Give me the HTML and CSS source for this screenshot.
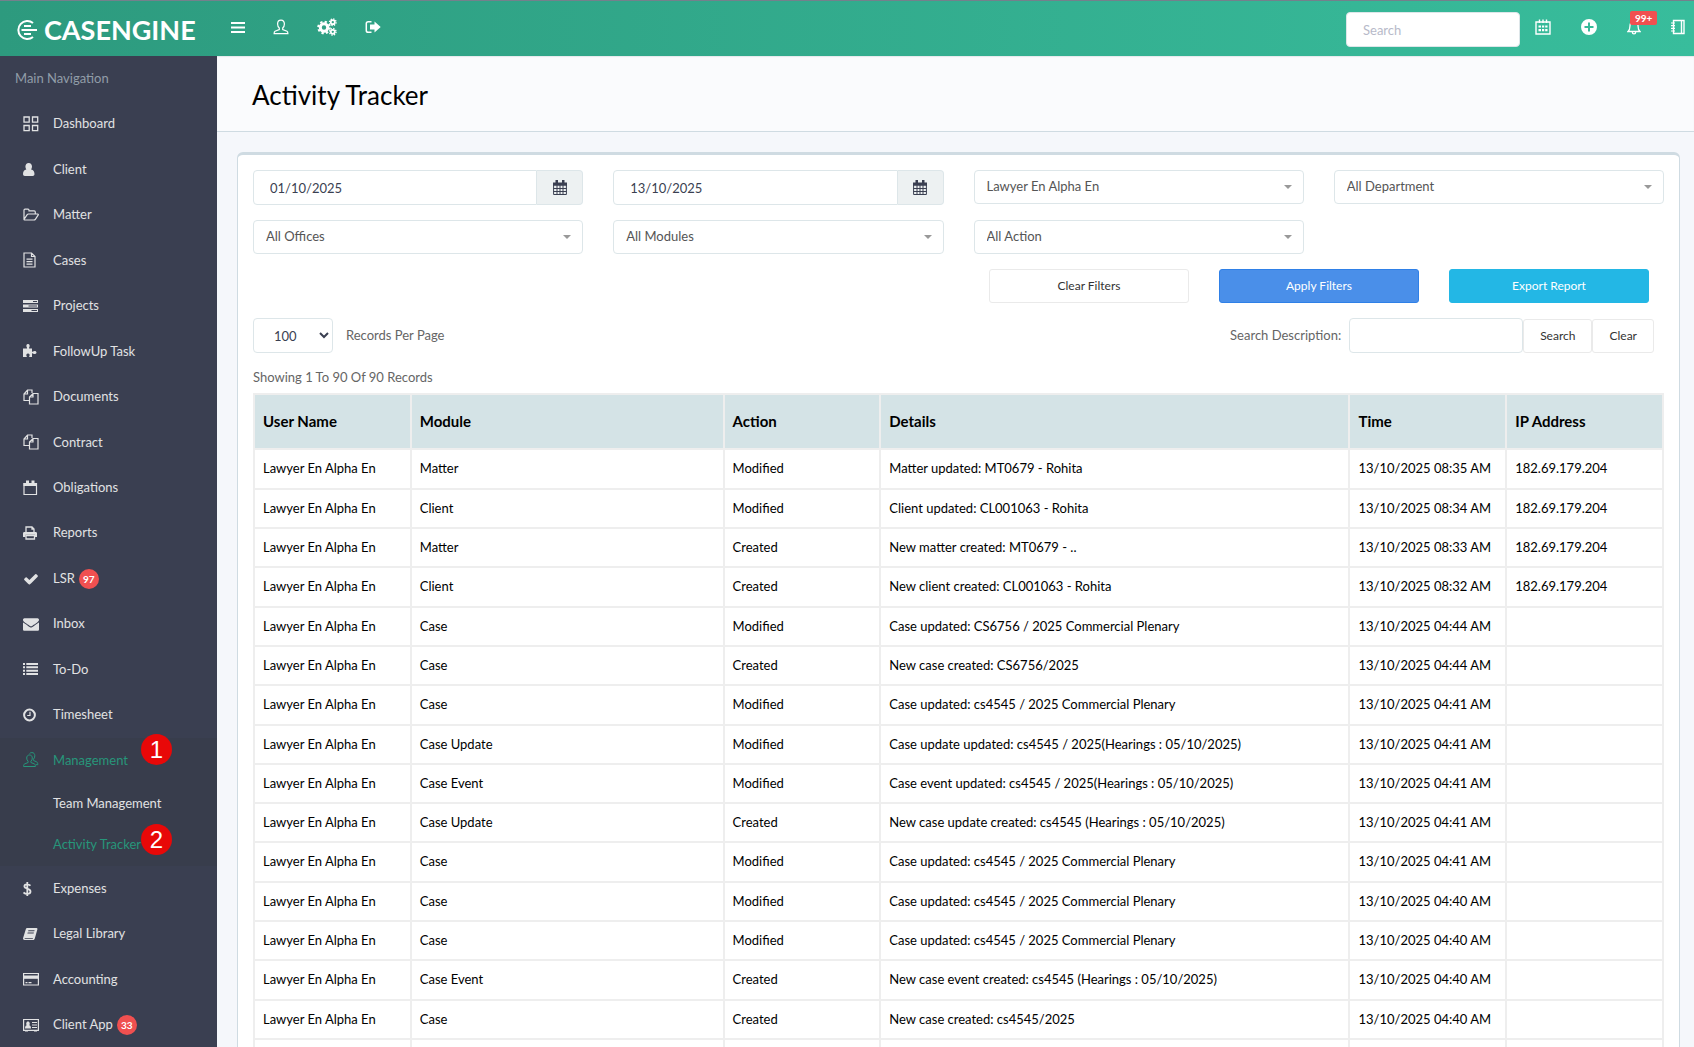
FILE: index.html
```html
<!DOCTYPE html>
<html lang="en">
<head>
    <meta charset="UTF-8">
    <meta name="viewport" content="width=device-width, initial-scale=1.0">
    <title>Activity Tracker</title>
    <link rel="stylesheet" href="styles.css">
</head>
<body>
    <svg class="sprite" aria-hidden="true">
        <symbol id="copy" viewBox="0 0 16 16"><path d="M6 11.5H1V5l3.5-4H9v3M4.500 1v4H1M6.500 15V8L10 4.500h5V15zM10 4.500V8H6.500" fill="none" stroke="currentColor" stroke-width="1.200"/></symbol>
        <symbol id="person" viewBox="0 0 16 16"><path d="M8 1.200C5.800 1.200 4.600 2.700 4.600 5c0 1.700.6 3.100 1.700 4v1.500L2 12.200c-.7.400-.9 1.300-.9 2.500h13.800c0-1.200-.2-2.100-.9-2.500l-4.300-1.700V9c1.100-.9 1.700-2.300 1.700-4 0-2.300-1.200-3.800-3.400-3.800z" fill="none" stroke="currentColor" stroke-width="1.200"/></symbol>
    </svg>

    <header class="topbar">
        <a class="brand" href="#">
            <svg class="brand-mark" viewBox="0 0 22 22" fill="none" stroke="currentColor" stroke-width="2"><path d="M17 4A9 9 0 1 0 17 18M8 7h7M8 15h7M5.500 11H21"/></svg>
            <span>CASENGINE</span>
        </a>
        <nav class="top-links" aria-label="Shortcuts">
            <a href="#" aria-label="Toggle menu"><svg width="14" height="16" viewBox="0 0 14 16"><path d="M.5 4h13M.5 8.500h13M.5 13h13" stroke="currentColor" stroke-width="2" stroke-linecap="round"/></svg></a>
            <a href="#" aria-label="Profile"><svg width="16" height="16"><use href="#person"/></svg></a>
            <a href="#" aria-label="Settings">
                <svg width="20" height="18" viewBox="0 0 20 18" fill="none" stroke="currentColor">
                    <circle cx="7" cy="9.500" r="3.700" stroke-width="3"/><circle cx="7" cy="9.500" r="5.800" stroke-width="2" stroke-dasharray="2.300 2.250"/>
                    <circle cx="15.800" cy="4.200" r="2" stroke-width="1.700"/><circle cx="15.800" cy="4.200" r="3.300" stroke-width="1.300" stroke-dasharray="1.300 1.290"/>
                    <circle cx="15.800" cy="13.800" r="2" stroke-width="1.700"/><circle cx="15.800" cy="13.800" r="3.300" stroke-width="1.300" stroke-dasharray="1.300 1.290"/>
                </svg>
            </a>
            <a href="#" aria-label="Log out"><svg width="16" height="16" viewBox="0 0 16 16"><path d="M6.500 2.700H3.200C2 2.700 1.300 3.400 1.300 4.600v6.800c0 1.200.7 1.900 1.900 1.900h3.300" fill="none" stroke="currentColor" stroke-width="1.500"/><path d="M9.500 2.500L15.700 8l-6.200 5.500V10.500H5v-5h4.500z" fill="currentColor"/></svg></a>
        </nav>
        <div class="top-right">
            <input class="control top-search" type="text" placeholder="Search" aria-label="Search">
            <nav class="top-links tools" aria-label="Tools">
                <a href="#" aria-label="Calendar"><svg width="16" height="16" viewBox="0 0 16 16"><path d="M1 3h14v12H1zM4.500.5V4M11.500.5V4M8 .5V4" fill="none" stroke="currentColor" stroke-width="1.400"/><path d="M3.500 7.500h2.500M7 7.500h2.200M10.200 7.500h2.300M3.500 11.200h2.500M7 11.200h2.200M10.200 11.200h2.300" stroke="currentColor" stroke-width="2.200"/></svg></a>
                <a href="#" aria-label="Add"><svg width="16" height="16" viewBox="0 0 16 16"><path fill="currentColor" fill-rule="evenodd" d="M8 0a8 8 0 1 1 0 16A8 8 0 0 1 8 0zM7 3.500V7H3.500v2H7v3.500h2V9h3.500V7H9V3.500z"/></svg></a>
                <a class="bell" href="#" aria-label="Notifications"><svg width="14" height="16" viewBox="0 0 14 16"><path d="M1 12.500c1.300-1 1.900-2.200 1.900-5C2.900 4 4.500 2 7 2s4.100 2 4.100 5.500c0 2.800.6 4 1.900 5zM7 .5V2M5.300 13c0 1.100.7 1.900 1.700 1.900s1.700-.8 1.700-1.900" fill="none" stroke="currentColor" stroke-width="1.300"/></svg><span class="bell-count">99+</span></a>
                <a href="#" aria-label="Notebook"><svg width="14" height="16" viewBox="0 0 14 16"><path d="M2.500 1.500h10.500v13H2.500zM10.500 1.500v13" fill="none" stroke="currentColor" stroke-width="1.400"/><path d="M0 4h4M0 6.700h4M0 9.300h4M0 12h4" stroke="currentColor" stroke-width="1.200"/></svg></a>
            </nav>
        </div>
    </header>

    <div class="layout">
        <aside class="sidebar">
            <p class="sidebar-heading">Main Navigation</p>
            <ul class="menu">
                <li><a href="#"><svg viewBox="0 0 16 16"><path d="M1 1h5.200v5.200H1zM9.500 1h5.200v5.200H9.500zM1 9.500h5.200v5.200H1zM9.500 9.500h5.200v5.200H9.500z" fill="none" stroke="currentColor" stroke-width="1.300"/></svg>Dashboard</a></li>
                <li><a href="#"><svg viewBox="0 0 16 16"><path d="M5.700 1C7.700 1 9 2.500 9 4.600c0 1.200-.3 2.100-.9 2.800 2.400.4 3.400 2.100 3.400 4.600 0 1.200-.7 2-1.800 2H1.800C.7 14 0 13.200 0 12c0-2.500 1-4.200 3.300-4.600-.6-.7-.9-1.600-.9-2.800C2.400 2.500 3.700 1 5.700 1z" fill="currentColor"/></svg>Client</a></li>
                <li><a href="#"><svg viewBox="0 0 16 16"><path d="M1 12.500V3.200c0-.7.400-1.100 1-1.100h3c.7 0 1 .4 1 1.100v.6h5.200c.7 0 1.100.4 1.100 1.100v2M1 12.500l3-4.600c.4-.6.800-.9 1.500-.9h9c.9 0 1 .5.6 1.100l-2.600 4c-.4.600-1 .9-1.700.9H1.600c-.5 0-.6-.2-.6-.5z" fill="none" stroke="currentColor" stroke-width="1.200"/></svg>Matter</a></li>
                <li><a href="#"><svg viewBox="0 0 16 16"><path d="M1 1h7.500L12 4.500V15H1zM8.500 1v3.500H12M3.500 7.200h6M3.500 9.700h6M3.500 12.200h6" fill="none" stroke="currentColor" stroke-width="1.200"/></svg>Cases</a></li>
                <li><a href="#"><svg viewBox="0 0 16 16"><path fill="currentColor" fill-rule="evenodd" d="M0 2h15v3H0zM10 3v1h4V3zM0 6.500h15v3H0zM5.500 7.500v1H14v-1zM0 11h15v3H0zM8.500 12v1H14v-1z"/></svg>Projects</a></li>
                <li><a href="#"><svg viewBox="0 0 16 16"><path fill="currentColor" d="M0 5.500h3.600c.5 0 .7-.4.300-1C2.800 3 3.300 1 5 1s2.200 2 1.200 3.500c-.4.600-.2 1 .3 1H9v2.700c0 .6.400.7 1 .3 1.500-1 3.500-.5 3.500 1s-2 2-3.500 1c-.6-.4-1-.3-1 .3V14H6.700c-.7 0-.7-.4-.3-1 .7-1 .2-2.500-1.400-2.500S2.900 12 3.600 13c.4.600.300 1-.4 1H0z"/></svg>FollowUp Task</a></li>
                <li><a href="#"><svg><use href="#copy"/></svg>Documents</a></li>
                <li><a href="#"><svg><use href="#copy"/></svg>Contract</a></li>
                <li><a href="#"><svg viewBox="0 0 16 16"><path d="M1 3.500h12.500v11H1z" fill="none" stroke="currentColor" stroke-width="1.200"/><path d="M.5 3h13.500v3H.5zM3 .5h3V4H3zM8.500.5h3V4h-3z" fill="currentColor"/></svg>Obligations</a></li>
                <li><a href="#"><svg viewBox="0 0 16 16"><path d="M3 8V2h6l2 2v4M9 2v2h2M3 10.500h8.500v3.500H3z" fill="none" stroke="currentColor" stroke-width="1.300"/><path fill="currentColor" d="M1.500 7h11c1 0 1.500.5 1.500 1.500V12h-2V9.800H2.500V12H0V8.500C0 7.500.5 7 1.500 7z"/></svg>Reports</a></li>
                <li><a href="#"><svg viewBox="0 0 1792 1792"><path fill="currentColor" d="M1671 566q0 40-28 68l-724 724-136 136q-28 28-68 28t-68-28l-136-136-362-362q-28-28-28-68t28-68l136-136q28-28 68-28t68 28l294 295 656-657q28-28 68-28t68 28l136 136q28 28 28 68z"/></svg>LSR <span class="badge">97</span></a></li>
                <li><a href="#"><svg viewBox="0 0 1792 1792"><path fill="currentColor" d="M1792 710v794q0 66-47 113t-113 47h-1472q-66 0-113-47t-47-113v-794q44 49 101 87 362 246 497 345 57 42 92 65t95 48 110 25h2q51 0 110-25t95-48 92-65q170-123 498-345 57-39 100-87zm0-294q0 79-49 151t-122 123q-376 261-468 325-10 7-42 31t-54 39-52 32-58 27-50 9h-2q-23 0-50-9t-58-27-52-32-54-39-42-31q-91-64-262-182t-205-143q-62-42-117-115t-55-137q0-78 41-130t119-52h1472q65 0 113 47t47 113z"/></svg>Inbox</a></li>
                <li><a href="#"><svg viewBox="0 0 16 16"><path d="M0 3h2M0 6.300h2M0 9.700h2M0 13h2M3.300 3H15M3.300 6.300H15M3.300 9.700H15M3.300 13H15" stroke="currentColor" stroke-width="1.900"/></svg>To-Do</a></li>
                <li><a href="#"><svg viewBox="0 0 16 16"><circle cx="6.500" cy="8" r="5.400" fill="none" stroke="currentColor" stroke-width="2"/><path d="M7 4.800V8.500H4.200" fill="none" stroke="currentColor" stroke-width="1.200"/></svg>Timesheet</a></li>
                <li class="open">
                    <a class="current" href="#"><svg viewBox="0 0 16 16" fill="none" stroke="currentColor" stroke-width="1"><path d="M6.500 3C4.700 3 3.700 4.200 3.700 6c0 1.500.5 2.500 1.400 3.200v1.300L1.500 12c-.7.300-.9 1-.9 2.500h11.800c0-1.500-.2-2.200-.9-2.500l-3.600-1.500V9.200C8.800 8.500 9.300 7.500 9.300 6c0-1.800-1-3-2.800-3z"/><path d="M6.500 1.700C7 1 7.800.6 8.900.6c1.900 0 2.900 1.200 2.900 3.200 0 1.500-.5 2.700-1.400 3.400v1.200l3.200 1.500c.9.400 1.200 1.200 1.200 2.800h-2"/></svg>Management</a>
                    <span class="callout">1</span>
                    <ul class="submenu">
                        <li><a href="#">Team Management</a></li>
                        <li><a class="current" href="#">Activity Tracker</a><span class="callout">2</span></li>
                    </ul>
                </li>
                <li><a href="#"><svg viewBox="0 0 16 16"><path d="M7.500 4.600C6.500 3.700 5.300 3.300 4 3.300c-1.600 0-2.600.7-2.600 1.900C1.400 8.300 7.500 6.800 7.500 10.500c0 1.500-1.300 2.400-3.300 2.400-1.500 0-2.800-.6-3.700-1.500M4.300 1v14" fill="none" stroke="currentColor" stroke-width="1.800"/></svg>Expenses</a></li>
                <li><a href="#"><svg viewBox="0 0 16 16"><path fill="currentColor" fill-rule="evenodd" d="M4.500 2h9c.8 0 1.100.6.900 1.300l-2.600 9.200c-.2.800-.8 1.500-1.700 1.500H1.500C.3 14-.2 13 .1 12L2.800 3.200C3 2.400 3.600 2 4.500 2zM5.400 4.300l-.3 1h6.200l.3-1zM4.700 6.600l-.3 1h6.200l.3-1zM1.800 12l-.2.800h8l.5-.8z"/></svg>Legal Library</a></li>
                <li><a href="#"><svg viewBox="0 0 16 16"><path d="M.6 2.500h14.800v11.500H.6zM2.500 11.700h2M5.500 11.700h3" fill="none" stroke="currentColor" stroke-width="1.200"/><path d="M.5 4.500h15v3.300H.5z" fill="currentColor"/></svg>Accounting</a></li>
                <li><a href="#"><svg viewBox="0 0 16 16"><path d="M.6 2.500h14.800v10.800H.6zM9 5.500h5M9 8h5M9 10.500h5M2 14h3M11 14h3" fill="none" stroke="currentColor" stroke-width="1.200"/><path fill="currentColor" d="M2 11.500c0-2 .6-3 1.800-3.300-1-1-.7-3.700 1.200-3.700s2.200 2.700 1.200 3.700C7.400 8.500 8 9.500 8 11.500z"/></svg>Client App <span class="badge">33</span></a></li>
            </ul>
        </aside>

        <main class="content">
            <div class="page-title">
                <h1>Activity Tracker</h1>
            </div>

            <section class="panel">
                <form class="filters">
                    <div class="input-group">
                        <input class="control" type="text" value="01/10/2025" aria-label="From date">
                        <button type="button" aria-label="Pick from date"><svg width="14" height="15" viewBox="0 0 14 15"><path d="M.6 3.500h12.800v11H.6zM.5 8.500h13M.5 11.500h13M4 5v9.500M7 5v9.500M10 5v9.500" fill="none" stroke="currentColor" stroke-width="1"/><path d="M0 2.500h14v3.200H0zM2.500 0h2.500v4H2.500zM9 0h2.500v4H9z" fill="currentColor"/></svg></button>
                    </div>
                    <div class="input-group">
                        <input class="control" type="text" value="13/10/2025" aria-label="To date">
                        <button type="button" aria-label="Pick to date"><svg width="14" height="15" viewBox="0 0 14 15"><path d="M.6 3.500h12.800v11H.6zM.5 8.500h13M.5 11.500h13M4 5v9.500M7 5v9.500M10 5v9.500" fill="none" stroke="currentColor" stroke-width="1"/><path d="M0 2.500h14v3.200H0zM2.500 0h2.500v4H2.500zM9 0h2.500v4H9z" fill="currentColor"/></svg></button>
                    </div>
                    <div class="select"><select aria-label="User"><option>Lawyer En Alpha En</option></select></div>
                    <div class="select"><select aria-label="Department"><option>All Department</option></select></div>
                    <div class="select"><select aria-label="Office"><option>All Offices</option></select></div>
                    <div class="select"><select aria-label="Module"><option>All Modules</option></select></div>
                    <div class="select"><select aria-label="Action"><option>All Action</option></select></div>
                </form>

                <div class="filter-actions">
                    <button type="button" class="btn">Clear Filters</button>
                    <button type="button" class="btn btn-primary">Apply Filters</button>
                    <button type="button" class="btn btn-info">Export Report</button>
                </div>

                <div class="table-tools">
                    <select class="control page-size" id="pageSize"><option>100</option></select>
                    <label for="pageSize">Records Per Page</label>
                    <div class="table-search">
                        <label for="description">Search Description:</label>
                        <input class="control" type="text" id="description">
                        <button type="button" class="btn">Search</button>
                        <button type="button" class="btn">Clear</button>
                    </div>
                </div>

                <p class="summary">Showing 1 To 90 Of 90 Records</p>

                <table class="activity">
                    <colgroup><col><col class="col-module"><col><col class="col-details"><col><col></colgroup>
                    <thead>
                        <tr><th>User Name</th><th>Module</th><th>Action</th><th>Details</th><th>Time</th><th>IP Address</th></tr>
                    </thead>
                    <tbody>
                        <tr><td>Lawyer En Alpha En</td><td>Matter</td><td>Modified</td><td>Matter updated: MT0679 - Rohita</td><td>13/10/2025 08:35 AM</td><td>182.69.179.204</td></tr>
                        <tr><td>Lawyer En Alpha En</td><td>Client</td><td>Modified</td><td>Client updated: CL001063 - Rohita</td><td>13/10/2025 08:34 AM</td><td>182.69.179.204</td></tr>
                        <tr><td>Lawyer En Alpha En</td><td>Matter</td><td>Created</td><td>New matter created: MT0679 - ..</td><td>13/10/2025 08:33 AM</td><td>182.69.179.204</td></tr>
                        <tr><td>Lawyer En Alpha En</td><td>Client</td><td>Created</td><td>New client created: CL001063 - Rohita</td><td>13/10/2025 08:32 AM</td><td>182.69.179.204</td></tr>
                        <tr><td>Lawyer En Alpha En</td><td>Case</td><td>Modified</td><td>Case updated: CS6756 / 2025 Commercial Plenary</td><td>13/10/2025 04:44 AM</td><td></td></tr>
                        <tr><td>Lawyer En Alpha En</td><td>Case</td><td>Created</td><td>New case created: CS6756/2025</td><td>13/10/2025 04:44 AM</td><td></td></tr>
                        <tr><td>Lawyer En Alpha En</td><td>Case</td><td>Modified</td><td>Case updated: cs4545 / 2025 Commercial Plenary</td><td>13/10/2025 04:41 AM</td><td></td></tr>
                        <tr><td>Lawyer En Alpha En</td><td>Case Update</td><td>Modified</td><td>Case update updated: cs4545 / 2025(Hearings : 05/10/2025)</td><td>13/10/2025 04:41 AM</td><td></td></tr>
                        <tr><td>Lawyer En Alpha En</td><td>Case Event</td><td>Modified</td><td>Case event updated: cs4545 / 2025(Hearings : 05/10/2025)</td><td>13/10/2025 04:41 AM</td><td></td></tr>
                        <tr><td>Lawyer En Alpha En</td><td>Case Update</td><td>Created</td><td>New case update created: cs4545 (Hearings : 05/10/2025)</td><td>13/10/2025 04:41 AM</td><td></td></tr>
                        <tr><td>Lawyer En Alpha En</td><td>Case</td><td>Modified</td><td>Case updated: cs4545 / 2025 Commercial Plenary</td><td>13/10/2025 04:41 AM</td><td></td></tr>
                        <tr><td>Lawyer En Alpha En</td><td>Case</td><td>Modified</td><td>Case updated: cs4545 / 2025 Commercial Plenary</td><td>13/10/2025 04:40 AM</td><td></td></tr>
                        <tr><td>Lawyer En Alpha En</td><td>Case</td><td>Modified</td><td>Case updated: cs4545 / 2025 Commercial Plenary</td><td>13/10/2025 04:40 AM</td><td></td></tr>
                        <tr><td>Lawyer En Alpha En</td><td>Case Event</td><td>Created</td><td>New case event created: cs4545 (Hearings : 05/10/2025)</td><td>13/10/2025 04:40 AM</td><td></td></tr>
                        <tr><td>Lawyer En Alpha En</td><td>Case</td><td>Created</td><td>New case created: cs4545/2025</td><td>13/10/2025 04:40 AM</td><td></td></tr>
                        <tr><td>&nbsp;</td><td></td><td></td><td></td><td></td><td></td></tr>
                    </tbody>
                </table>
            </section>
        </main>
    </div>
</body>
</html>
```

FILE: styles.css
```css
* {
    box-sizing: border-box;
}
html {
    scrollbar-width: none;
}
body {
    margin: 0;
    font-family: Lato, sans-serif;
    font-size: 13px;
    line-height: 1.64;
    color: #656565;
    background-color: #f5f7fb;
}
a {
    color: inherit;
    text-decoration: none;
}
ul {
    list-style: none;
    margin: 0;
    padding: 0;
}
input, select, button {
    font-family: inherit;
    font-size: 13px;
}
svg {
    display: block;
    flex: none;
}
.sprite {
    position: absolute;
    width: 0;
    height: 0;
}

/* top bar */
.topbar {
    display: flex;
    align-items: center;
    height: 56px;
    padding: 2px 9px 0 16px;
    border-top: 1px solid #74808c;
    color: #fff;
    background-image: linear-gradient(to right, #2d9a7e, #38bd9c);
}
.brand {
    display: flex;
    align-items: center;
    gap: 6px;
    width: 215px;
    font-size: 27px;
    font-weight: bold;
    line-height: 1;
}
.brand-mark {
    width: 22px;
    height: 22px;
}
.top-links {
    display: flex;
    align-items: center;
    gap: 28px;
    padding-bottom: 6px;
}
.tools {
    gap: 30px;
}
.top-right {
    display: flex;
    align-items: center;
    gap: 15px;
    margin-left: auto;
}
.bell {
    position: relative;
}
.bell-count {
    position: absolute;
    left: 3px;
    top: -8px;
    padding: 0 5px;
    border-radius: 2px;
    font-size: 10px;
    font-weight: bold;
    line-height: 14px;
    background: #f05050;
}

/* sidebar */
.layout {
    display: flex;
}
.sidebar {
    width: 217px;
    flex: none;
    line-height: 1.65;
    color: #e1e2e3;
    background: #3a3f51;
}
.sidebar-heading {
    margin: 0;
    padding: 12px 15px;
    color: #919da8;
}
.menu a {
    display: flex;
    align-items: center;
    padding: 12px 23px;
}
.menu svg {
    width: 16px;
    height: 16px;
    margin-right: 14px;
}
.open {
    position: relative;
    background: #383d4c;
}
.menu .current {
    color: #27967a;
}
.submenu li {
    position: relative;
}
.menu .submenu a {
    padding: 10px 53px;
    white-space: nowrap;
}
.callout {
    position: absolute;
    left: 141px;
    top: -4px;
    width: 31px;
    height: 31px;
    border-radius: 50%;
    font-family: "Liberation Sans", sans-serif;
    font-size: 24px;
    line-height: 31px;
    text-align: center;
    color: #fff;
    background: #e80808;
}
.submenu .callout {
    top: 0;
}
.badge {
    width: 20px;
    margin-left: 4px;
    border-radius: 50%;
    font-size: 10px;
    font-weight: bold;
    line-height: 20px;
    text-align: center;
    color: #fff;
    background: #f05050;
}

/* page */
.content {
    flex: 1;
    min-width: 0;
}
.page-title {
    padding: 22px 35px 18px;
    border-bottom: 1px solid #cfdbe2;
    background: #fafbfd;
    box-shadow: inset 0 1px 1px #e4e8ec;
}
h1 {
    margin: 0;
    font-size: 26px;
    font-weight: normal;
    line-height: 35px;
    color: #000;
}
.panel {
    margin: 20px 14px 20px 20px;
    padding: 15px;
    border: 1px solid #cfdbe2;
    border-top-width: 3px;
    border-radius: 6px;
    background: #fff;
}
.filters {
    display: grid;
    grid-template-columns: repeat(4, 1fr);
    gap: 15px 30px;
}
.control {
    height: 35px;
    width: 174px;
    padding: 6px 16px;
    border: 1px solid #dde6e9;
    border-radius: 4px;
    color: #3a3f51;
    background: #fff;
}
.control::placeholder {
    color: #b7bac9;
}
.input-group {
    display: flex;
}
.input-group .control {
    flex: 1;
    min-width: 0;
    border-radius: 4px 0 0 4px;
}
.input-group button {
    display: flex;
    align-items: center;
    justify-content: center;
    width: 46px;
    padding: 0;
    border: 1px solid #dde6e9;
    border-left: 0;
    border-radius: 0 4px 4px 0;
    color: #3a3f51;
    background: #edf1f2;
}
.select {
    position: relative;
}
.select select {
    appearance: none;
    width: 100%;
    height: 34px;
    padding: 0 12px 2px;
    border: 1px solid #dde6e9;
    border-radius: 4px;
    color: #555;
    background: #fff;
}
.select::after {
    content: "";
    position: absolute;
    right: 12px;
    top: 15px;
    border: 4px solid transparent;
    border-top-color: #999;
    pointer-events: none;
}
.filter-actions {
    display: flex;
    justify-content: flex-end;
    gap: 30px;
    padding: 15px;
}
.btn {
    height: 34px;
    padding: 0 16px 1px;
    border: 1px solid #eaeaea;
    border-radius: 3px;
    font-size: 12px;
    color: #333;
    background: #fff;
}
.filter-actions .btn {
    width: 200px;
}
.btn-primary {
    border-color: #2f80e7;
    color: #fff;
    background: #4a8fe9;
}
.btn-info {
    border-color: #23b7e5;
    color: #fff;
    background: #23b7e5;
}
.table-tools {
    display: flex;
    align-items: center;
    padding-right: 10px;
}
.page-size {
    width: 80px;
    margin-right: 13px;
    padding: 0 0 0 16px;
}
.table-search {
    display: flex;
    align-items: center;
    margin-left: auto;
}
.table-search .control {
    margin-left: 8px;
}
.summary {
    margin: 14px 0 5px;
}

.activity {
    width: 100%;
    table-layout: fixed;
    border-collapse: collapse;
    color: #000;
}
.col-module {
    width: 22.2%;
}
.col-details {
    width: 33.3%;
}
.activity th, .activity td {
    padding: 8px;
    border: 2px solid #eee;
    text-align: left;
    white-space: nowrap;
}
.activity th {
    height: 55px;
    padding-bottom: 10px;
    font-size: 15px;
    background: #d4e3e6;
}
```
